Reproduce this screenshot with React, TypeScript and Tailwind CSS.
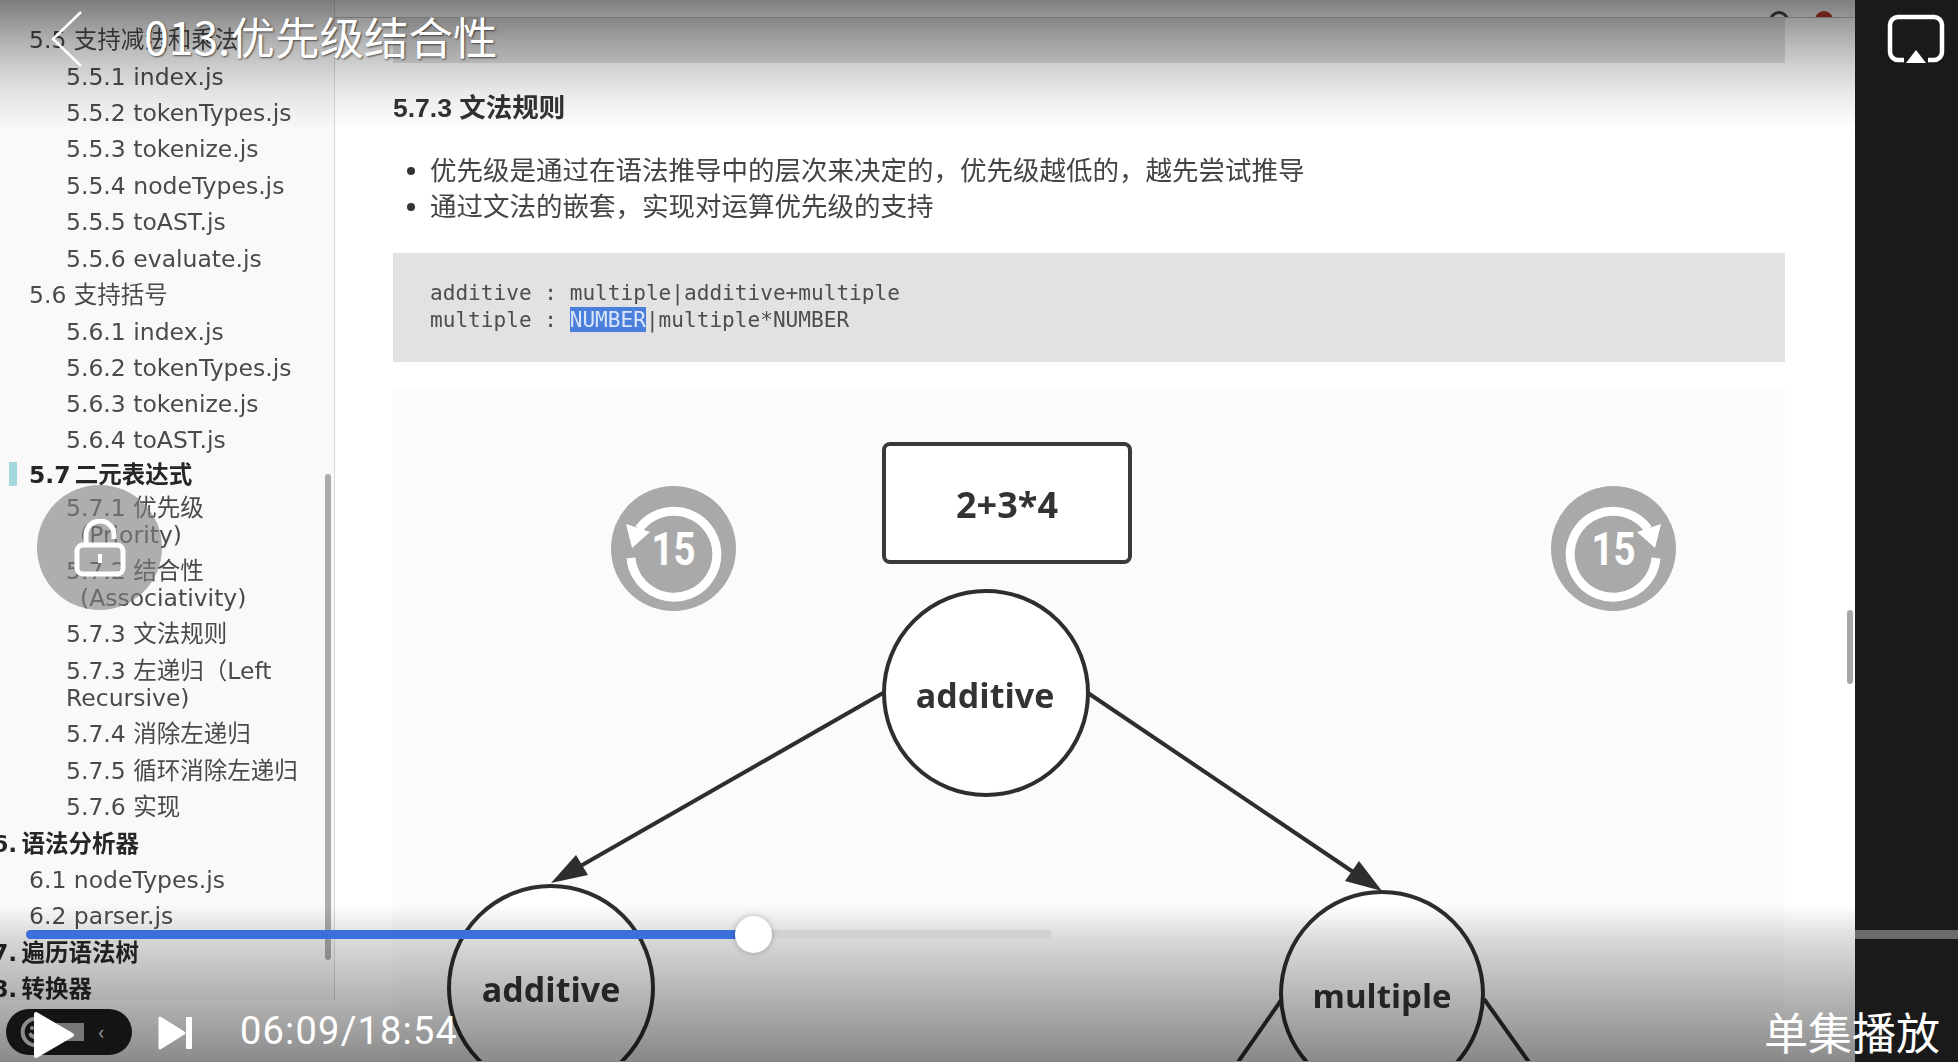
import { Smile } from 'lucide-react';

type TocRow = { text: string; level: 1 | 2 | 3; bold?: boolean; active?: boolean; wrap?: string; wrapIndent?: boolean; h: string };

const toc: TocRow[] = [
  { text: '5.5 支持减法和乘法', level: 2, h: 'h-[37px]' },
  { text: '5.5.1 index.js', level: 3, h: 'h-[36px]' },
  { text: '5.5.2 tokenTypes.js', level: 3, h: 'h-[36px]' },
  { text: '5.5.3 tokenize.js', level: 3, h: 'h-[37px]' },
  { text: '5.5.4 nodeTypes.js', level: 3, h: 'h-[36px]' },
  { text: '5.5.5 toAST.js', level: 3, h: 'h-[37px]' },
  { text: '5.5.6 evaluate.js', level: 3, h: 'h-[36px]' },
  { text: '5.6 支持括号', level: 2, h: 'h-[37px]' },
  { text: '5.6.1 index.js', level: 3, h: 'h-[36px]' },
  { text: '5.6.2 tokenTypes.js', level: 3, h: 'h-[36px]' },
  { text: '5.6.3 tokenize.js', level: 3, h: 'h-[36px]' },
  { text: '5.6.4 toAST.js', level: 3, h: 'h-[35px]' },
  { text: '5.7 二元表达式', level: 2, bold: true, active: true, h: 'h-[33px]' },
  { text: '5.7.1 优先级', wrap: '(Priority)', wrapIndent: true, level: 3, h: 'h-[63px]' },
  { text: '5.7.2 结合性', wrap: '(Associativity)', wrapIndent: true, level: 3, h: 'h-[63px]' },
  { text: '5.7.3 文法规则', level: 3, h: 'h-[37px]' },
  { text: '5.7.3 左递归（Left', wrap: 'Recursive)', level: 3, h: 'h-[63px]' },
  { text: '5.7.4 消除左递归', level: 3, h: 'h-[37px]' },
  { text: '5.7.5 循环消除左递归', level: 3, h: 'h-[36px]' },
  { text: '5.7.6 实现', level: 3, h: 'h-[37px]' },
  { text: '6. 语法分析器', level: 1, bold: true, h: 'h-[36px]' },
  { text: '6.1 nodeTypes.js', level: 2, h: 'h-[36px]' },
  { text: '6.2 parser.js', level: 2, h: 'h-[37px]' },
  { text: '7. 遍历语法树', level: 1, bold: true, h: 'h-[36px]' },
  { text: '8. 转换器', level: 1, bold: true, h: 'h-[36px]' },
];

function Replay15({ forward }: { forward?: boolean }) {
  return (
    <div className="flex h-[125px] w-[125px] items-center justify-center rounded-full bg-[#a9a9a9]">
      <svg viewBox="0 0 125 125" className="h-[125px] w-[125px]">
        <g transform={forward ? 'translate(125 0) scale(-1 1)' : undefined}>
          <path d="M20 72 A43 43 0 1 0 28 43" fill="none" stroke="#fff" strokeWidth="9" />
          <path d="M15 38 L39 46 L21 62 Z" fill="#fff" />
        </g>
        <text transform="translate(62.5 79) scale(0.82 1)" textAnchor="middle" fill="#fff" fontSize="47" fontWeight="700" fontFamily="Roboto, sans-serif">
          15
        </text>
      </svg>
    </div>
  );
}

function Diagram() {
  const label = { fontFamily: '"Open Sans", sans-serif', fontWeight: 700, fill: '#333', textAnchor: 'middle' as const };
  return (
    <svg viewBox="393 390 1392 672" className="h-[672px] w-[1392px]">
      <g stroke="#2e2e2e" strokeWidth="4" fill="none">
        <line x1="883" y1="694" x2="570" y2="873" />
        <line x1="1088" y1="694" x2="1365" y2="881" />
        <line x1="1282" y1="1000" x2="1236" y2="1066" />
        <line x1="1484" y1="1000" x2="1531" y2="1066" />
      </g>
      <polygon points="551,884 588,876 576,856" fill="#2e2e2e" />
      <polygon points="1382,892 1345,882 1359,862" fill="#2e2e2e" />
      <rect x="884" y="445" width="246" height="118" rx="6" fill="#fff" stroke="#3a3a3a" strokeWidth="4" />
      <ellipse cx="986" cy="694" rx="102" ry="102" fill="#fff" stroke="#2e2e2e" strokeWidth="4" />
      <ellipse cx="551" cy="989" rx="102" ry="102" fill="#fff" stroke="#2e2e2e" strokeWidth="4" />
      <ellipse cx="1382" cy="995" rx="101" ry="102" fill="#fff" stroke="#2e2e2e" strokeWidth="4" />
      <text x="1007" y="519" {...label} fontSize={36}>2+3*4</text>
      <text x="985" y="709" {...label} fontSize={34}>additive</text>
      <text x="551" y="1003" {...label} fontSize={34}>additive</text>
      <text x="1382" y="1009" {...label} fontSize={33}>multiple</text>
    </svg>
  );
}

export default function App() {
  return (
    <div className="relative flex h-[1062px] w-[1958px] overflow-hidden bg-[#1a1a1b]">
      <div className="relative flex h-full w-[1855px] shrink-0 bg-white blur-[0.5px]">
        {/* toc */}
        <aside className="relative z-0 h-[1000px] w-[335px] shrink-0 overflow-hidden border-r border-[#d8d8d8] bg-[#f9f9f9] pt-[27px] font-['DejaVu_Sans','Noto_Sans_CJK_SC',sans-serif] text-[23.5px] leading-[27px] text-[#4a4a4a]">
          {toc.map((row) => (
            <div
              key={row.text}
              className={`relative ${row.h} ${row.level === 1 ? 'pl-0 -ml-[8px]' : row.level === 2 ? 'pl-[29px]' : 'pl-[66px]'} ${row.bold ? 'font-bold text-[#262626] [word-spacing:-4px]' : ''}`}
            >
              {row.active && <span className="absolute left-[9px] top-0 h-[24px] w-[8px] bg-[#a3d9dc]" />}
              <div className="whitespace-nowrap">{row.text}</div>
              {row.wrap && <div className={`whitespace-nowrap ${row.wrapIndent ? 'pl-[14px]' : ''}`}>{row.wrap}</div>}
            </div>
          ))}
          <div className="absolute left-[325px] top-[474px] h-[486px] w-[6px] rounded-full bg-[#ababab]" />
        </aside>

        {/* document */}
        <main className="flex h-full min-w-0 flex-1 flex-col pl-[58px] pr-[70px] font-['Liberation_Sans','Noto_Sans_CJK_SC',sans-serif]">
          <div className="-ml-[58px] -mr-[70px] flex h-[18px] shrink-0 items-end justify-end gap-[26px] overflow-hidden border-b border-[#c8c8c8] pr-[22px]">
            <span className="-mb-[14px] h-[20px] w-[20px] rounded-full border-[3px] border-[#444]" />
            <span className="-mb-[12px] h-[18px] w-[18px] rounded-full bg-[#c0392b]" />
          </div>
          <div className="h-[45px] shrink-0 bg-[#e2e2e2]" />
          <h3 className="mt-[30px] shrink-0 text-[26.5px] font-bold leading-[30px] text-[#333]">5.7.3 文法规则</h3>
          <ul className="mt-[30px] shrink-0 text-[26.5px] leading-[36px] text-[#444]">
            <li className="flex items-center">
              <span className="ml-[14px] mr-[15px] h-[8px] w-[8px] rounded-full bg-[#333]" />
              优先级是通过在语法推导中的层次来决定的，优先级越低的，越先尝试推导
            </li>
            <li className="flex items-center">
              <span className="ml-[14px] mr-[15px] h-[8px] w-[8px] rounded-full bg-[#333]" />
              通过文法的嵌套，实现对运算优先级的支持
            </li>
          </ul>
          <pre className="mt-[28px] h-[109px] shrink-0 bg-[#e2e2e2] pl-[37px] pt-[26px] font-['DejaVu_Sans_Mono','Liberation_Mono',monospace] text-[21.1px] leading-[27px] text-[#4d4d4d]">
            {'additive : multiple|additive+multiple\nmultiple : '}
            <span className="bg-[#4a7fdc] text-[#dbe6fa]">NUMBER</span>
            {'|multiple*NUMBER'}
          </pre>
          <div className="mt-[27px] min-h-0 flex-1 overflow-hidden bg-[#fbfbfb]">
            <Diagram />
          </div>
        </main>
      </div>

      {/* player overlays */}
      <div className="pointer-events-none absolute left-0 top-0 h-[130px] w-[1855px] bg-[linear-gradient(to_bottom,rgba(0,0,0,0.5)_0px,rgba(0,0,0,0.27)_45px,rgba(0,0,0,0.18)_66px,rgba(0,0,0,0.08)_95px,rgba(0,0,0,0)_130px)]" />
      <div className="pointer-events-none absolute bottom-0 left-0 h-[157px] w-[1855px] bg-[linear-gradient(to_bottom,rgba(0,0,0,0)_0px,rgba(0,0,0,0.14)_35px,rgba(0,0,0,0.46)_157px)]" />
      <div className="absolute left-[1847px] top-[610px] h-[74px] w-[6px] rounded-full bg-[#a6a6a6]" />

      <svg viewBox="0 0 32 56" className="absolute left-[51px] top-[11px] h-[56px] w-[32px]">
        <path d="M30 1 L2 28 L30 55" fill="none" stroke="#fff" strokeWidth="2.5" />
      </svg>
      <div className="absolute left-[144px] top-[8px] font-['Noto_Sans_CJK_SC',sans-serif] text-[44.5px] leading-[56px] text-white [text-shadow:1px_1px_2px_rgba(0,0,0,0.6)]">
        013.优先级结合性
      </div>

      <svg viewBox="0 0 58 50" className="absolute left-[1887px] top-[14px] h-[50px] w-[58px]">
        <path d="M17 46 H11 A8 8 0 0 1 3 38 V11 A8 8 0 0 1 11 3 H47 A8 8 0 0 1 55 11 V38 A8 8 0 0 1 47 46 H41" fill="none" stroke="#fff" strokeWidth="4.5" />
        <path d="M29 36 L39 49 H19 Z" fill="#fff" />
      </svg>

      <div className="absolute left-[37px] top-[485px] flex h-[125px] w-[125px] items-center justify-center rounded-full bg-[rgba(128,128,128,0.62)]">
        <svg viewBox="0 0 52 58" className="h-[58px] w-[52px]">
          <path d="M12 26 V16 A14 14 0 0 1 40 16 V20" fill="none" stroke="#fff" strokeWidth="5" />
          <rect x="3" y="26" width="46" height="29" rx="6" fill="none" stroke="#fff" strokeWidth="5" />
          <rect x="24" y="35" width="4" height="9" fill="#fff" />
        </svg>
      </div>

      <div className="absolute left-[611px] top-[486px]">
        <Replay15 />
      </div>
      <div className="absolute left-[1551px] top-[486px]">
        <Replay15 forward />
      </div>

      {/* progress */}
      <div className="absolute left-[26px] top-[930px] h-[9px] w-[1025px] bg-[#d2d2d2]" />
      <div className="absolute left-[1855px] top-[930px] h-[9px] w-[103px] bg-[#6b6b6b]" />
      <div className="absolute left-[26px] top-[930px] h-[9px] w-[725px] rounded-l-full bg-[#3b6fdd]" />
      <div className="absolute left-[735px] top-[916px] h-[37px] w-[37px] rounded-full bg-white shadow-[0_0_6px_rgba(0,0,0,0.25)]" />

      <div className="absolute left-[6px] top-[1009px] flex h-[46px] w-[126px] items-center rounded-full bg-[#141414] pl-[14px] text-[#8d8d8d]">
        <Smile className="h-[32px] w-[32px]" strokeWidth={3} />
        <span className="ml-[2px] h-[18px] w-[30px] bg-[#777]" />
        <span className="ml-[14px] text-[20px] leading-none">‹</span>
      </div>
      <svg viewBox="0 0 42 48" className="absolute left-[33px] top-[1011px] h-[48px] w-[42px]">
        <path d="M3 3 L39 24 L3 45 Z" fill="#fff" stroke="#fff" strokeWidth="4" strokeLinejoin="round" />
      </svg>
      <svg viewBox="0 0 36 36" className="absolute left-[158px] top-[1015px] h-[36px] w-[36px]">
        <path d="M2 3 L26 18 L2 33 Z" fill="#fff" stroke="#fff" strokeWidth="3" strokeLinejoin="round" />
        <rect x="28" y="2" width="6" height="32" rx="1" fill="#fff" />
      </svg>
      <div className="absolute left-[240px] top-[1009px] font-['Roboto',sans-serif] text-[38px] font-normal leading-[44px] tracking-[1.2px] text-white">06:09/18:54</div>
      <div className="absolute left-[1764px] top-[1003px] font-['Noto_Sans_CJK_SC',sans-serif] text-[44px] leading-[56px] text-white">单集播放</div>
    </div>
  );
}
